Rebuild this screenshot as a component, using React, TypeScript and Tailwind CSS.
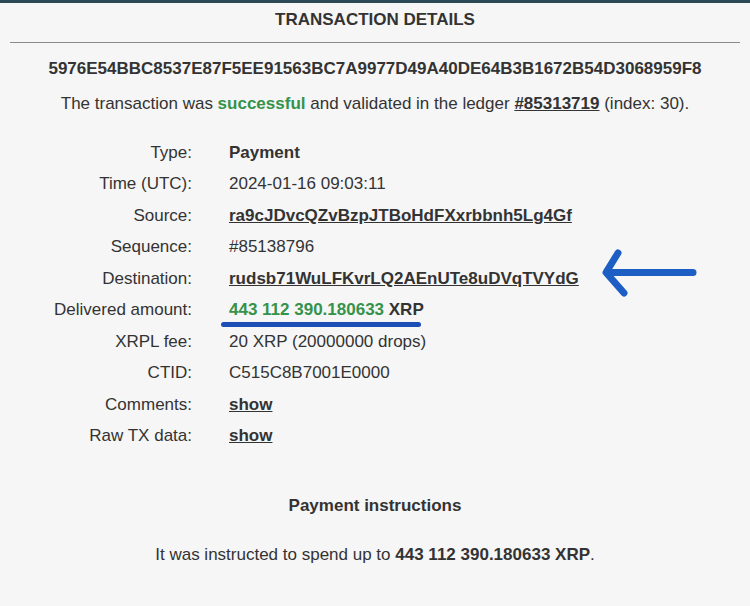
import React from "react";

const rows: { label: string; value: React.ReactNode }[] = [
  { label: "Type:", value: <span className="font-bold">Payment</span> },
  { label: "Time (UTC):", value: "2024-01-16 09:03:11" },
  {
    label: "Source:",
    value: <a className="font-bold underline">ra9cJDvcQZvBzpJTBoHdFXxrbbnh5Lg4Gf</a>,
  },
  { label: "Sequence:", value: "#85138796" },
  {
    label: "Destination:",
    value: <a className="font-bold underline">rudsb71WuLFKvrLQ2AEnUTe8uDVqTVYdG</a>,
  },
  {
    label: "Delivered amount:",
    value: (
      <span className="font-bold">
        <span className="text-[#35924b]">443 112 390.180633</span> XRP
      </span>
    ),
  },
  { label: "XRPL fee:", value: "20 XRP (20000000 drops)" },
  { label: "CTID:", value: "C515C8B7001E0000" },
  { label: "Comments:", value: <a className="font-bold underline">show</a> },
  { label: "Raw TX data:", value: <a className="font-bold underline">show</a> },
];

export default function App() {
  return (
    <div
      className="relative w-[750px] h-[606px] overflow-hidden bg-[#f6f6f6] text-[17px] text-[#333]"
      style={{ fontFamily: '"Liberation Sans", Arial, sans-serif' }}
    >
      <div className="h-[3px] bg-[#2b4a55]" />

      <h1 className="mt-[7px] text-center font-bold leading-[20px]">TRANSACTION DETAILS</h1>
      <div className="mx-[10px] mt-[12px] h-px bg-[#8a8a8a]" />

      <div className="mt-[16px] text-center font-bold leading-[20px]">
        5976E54BBC8537E87F5EE91563BC7A9977D49A40DE64B3B1672B54D3068959F8
      </div>
      <p className="mt-[15px] text-center leading-[20px]">
        The transaction was <span className="font-bold text-[#35924b]">successful</span> and
        validated in the ledger <a className="font-bold underline">#85313719</a> (index: 30).
      </p>

      <div className="mt-[23px] grid grid-cols-[192px_1fr]">
        {rows.map((r) => (
          <React.Fragment key={r.label}>
            <div className="h-[31.45px] leading-[31.45px] text-right">{r.label}</div>
            <div className="h-[31.45px] leading-[31.45px] pl-[37px]">{r.value}</div>
          </React.Fragment>
        ))}
      </div>

      <h2 className="mt-[45px] text-center font-bold leading-[20px]">Payment instructions</h2>
      <p className="mt-[29px] text-center leading-[20px]">
        It was instructed to spend up to <span className="font-bold">443 112 390.180633 XRP</span>.
      </p>

      {/* hand-drawn annotations */}
      <div className="absolute left-[221px] top-[322px] h-[5px] w-[200px] rounded-full bg-[#1b4fb5]" />
      <svg
        className="absolute left-[596px] top-[244px]"
        width="106"
        height="58"
        viewBox="0 0 106 58"
        fill="none"
        stroke="#1d5ec4"
        strokeWidth="7"
        strokeLinecap="round"
        strokeLinejoin="round"
      >
        <path d="M12 28.5 H97" />
        <path d="M22 9 L10 28.5 L28 49" />
      </svg>
    </div>
  );
}
